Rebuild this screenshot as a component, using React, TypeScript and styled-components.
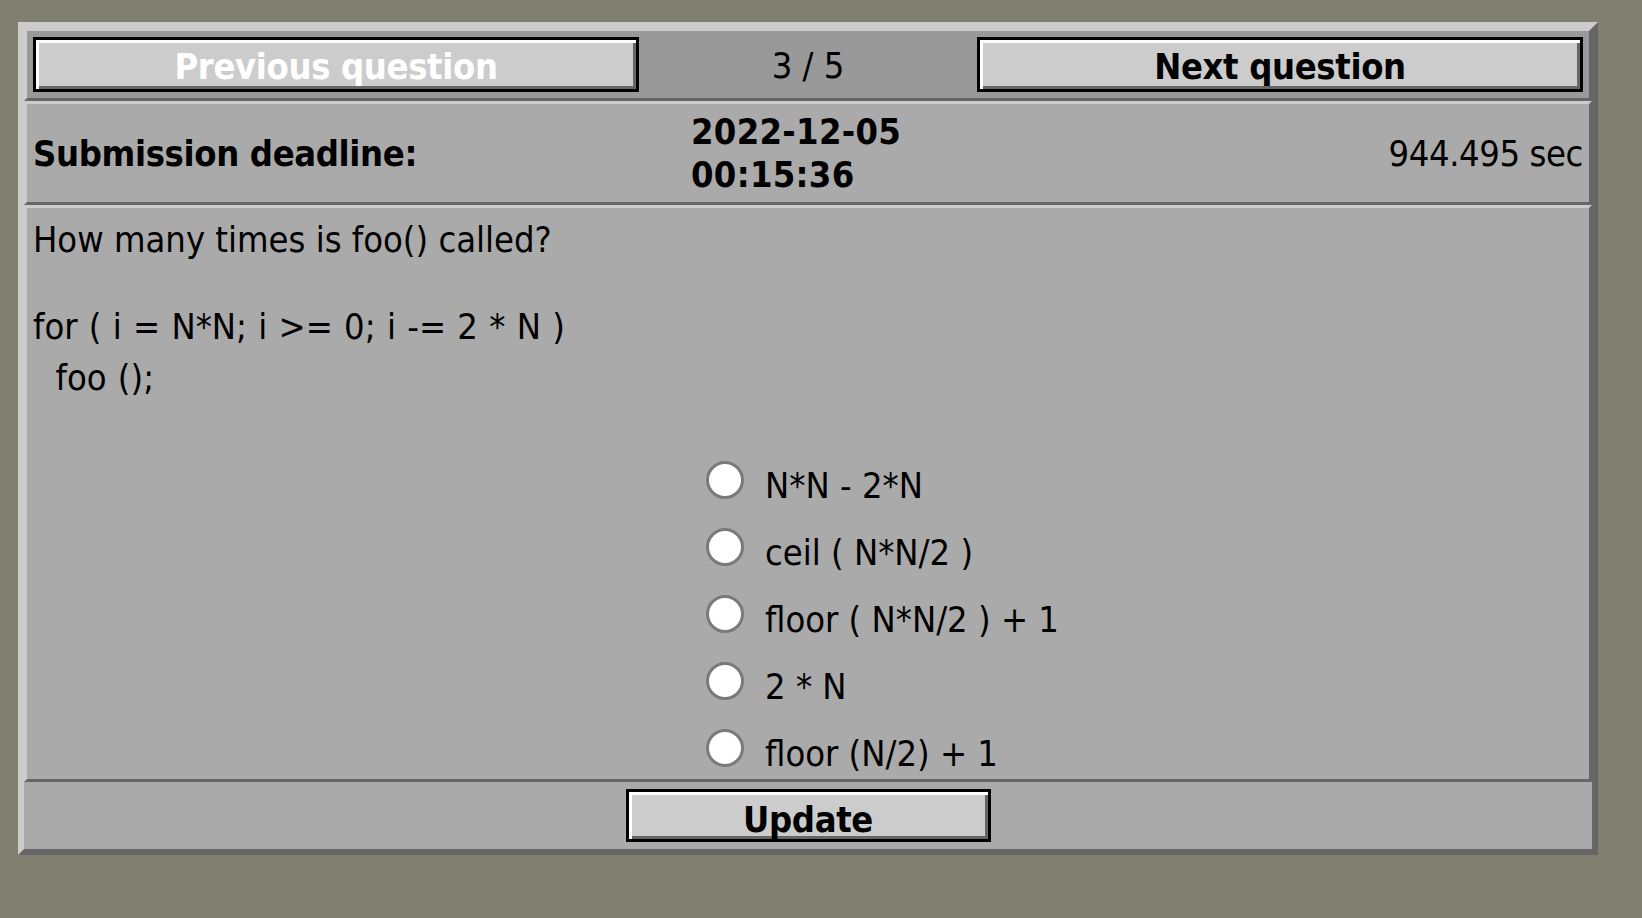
import React from "react";
import styled, { createGlobalStyle } from "styled-components";

const GlobalStyle = createGlobalStyle`
  html, body {
    margin: 0;
    padding: 0;
    background: #808070;
    min-height: 100%;
  }
  body {
    font-family: "DejaVu Sans Condensed", "DejaVu Sans", sans-serif;
    font-size: 36px;
    color: #000;
  }
`;

const Page = styled.div`
  padding: 22px 0 0 18px;
  min-height: 918px;
  box-sizing: border-box;
`;

const Panel = styled.div`
  width: 1580px;
  box-sizing: border-box;
  border: 6px solid;
  border-color: #cccccc #666666 #666666 #cccccc;
  background: #aaaaaa;
`;

const Row = styled.div<{ $bg?: string }>`
  border: 3px solid;
  border-color: #cccccc #666666 #666666 #cccccc;
  background: ${(p) => p.$bg || "#aaaaaa"};
  box-sizing: border-box;
`;

const NavRow = styled(Row)`
  display: grid;
  grid-template-columns: 606px 1fr 606px;
  align-items: center;
  padding: 6px;
`;

const NavButton = styled.button<{ $disabled?: boolean; $shift?: number }>`
  height: 55px;
  width: 100%;
  box-sizing: border-box;
  border: 3px solid #000;
  background: #cccccc;
  box-shadow: inset 3px 3px 0 #ffffff, inset -3px -3px 0 #666666;
  font-family: inherit;
  font-size: 36px;
  font-weight: bold;
  letter-spacing: -0.35px;
  color: ${(p) => (p.$disabled ? "#ffffff" : "#000000")};
  padding: ${(p) => p.$shift ?? 4}px 0 0 0;
  display: flex;
  align-items: center;
  justify-content: center;
  cursor: pointer;
`;

const Counter = styled.div`
  text-align: center;
  line-height: 43px;
  padding-top: 2px;
`;

const DeadlineRow = styled(Row)`
  display: grid;
  grid-template-columns: 658px auto 1fr;
  align-items: center;
  padding: 6px;
  line-height: 43px;
`;

const Label = styled.div`
  font-weight: bold;
  letter-spacing: -0.35px;
`;

const DateText = styled.div`
  font-weight: bold;
  letter-spacing: 0.3px;
`;

const Remaining = styled.div`
  text-align: right;
  letter-spacing: -0.4px;
`;

const QuestionRow = styled(Row)`
  padding: 10px 6px 0 6px;
`;

const QuestionTitle = styled.div`
  line-height: 43px;
`;

const Code = styled.div`
  margin-top: 40px;
  line-height: 51px;
  white-space: pre;
  word-spacing: 1px;
`;

const Answers = styled.div`
  margin: 52px 0 0 658px;
  display: grid;
  row-gap: 11px;
`;

const Answer = styled.label`
  display: flex;
  align-items: flex-start;
  height: 56px;
  cursor: pointer;
`;

const Radio = styled.input`
  appearance: none;
  -webkit-appearance: none;
  width: 38px;
  height: 38px;
  box-sizing: border-box;
  margin: 6px 21px 0 15px;
  border-radius: 50%;
  border: 3px solid #7a7a7a;
  background: #ffffff;
  flex: none;
`;

const AnswerText = styled.span`
  margin-top: 9px;
  line-height: 43px;
`;

const UpdateRow = styled.div`
  height: 67px;
  display: flex;
  align-items: center;
  justify-content: center;
  background: #aaaaaa;
`;

const UpdateButton = styled(NavButton)`
  width: 365px;
  height: 53px;
`;

const answers = [
  "N*N - 2*N",
  "ceil ( N*N/2 )",
  "floor ( N*N/2 ) + 1",
  "2 * N",
  "floor (N/2) + 1",
];

export default function App() {
  return (
    <Page>
      <GlobalStyle />
      <Panel>
        <NavRow $bg="#999999">
          <NavButton $disabled>Previous question</NavButton>
          <Counter>3 / 5</Counter>
          <NavButton>Next question</NavButton>
        </NavRow>
        <DeadlineRow>
          <Label>Submission deadline:</Label>
          <DateText>
            2022-12-05
            <br />
            00:15:36
          </DateText>
          <Remaining>944.495 sec</Remaining>
        </DeadlineRow>
        <QuestionRow>
          <QuestionTitle>How many times is foo() called?</QuestionTitle>
          <Code>{"for ( i = N*N; i >= 0; i -= 2 * N )\n  foo ();"}</Code>
          <Answers>
            {answers.map((a) => (
              <Answer key={a}>
                <Radio type="radio" name="answer" />
                <AnswerText>{a}</AnswerText>
              </Answer>
            ))}
          </Answers>
        </QuestionRow>
        <UpdateRow>
          <UpdateButton $shift={8}>Update</UpdateButton>
        </UpdateRow>
      </Panel>
    </Page>
  );
}
